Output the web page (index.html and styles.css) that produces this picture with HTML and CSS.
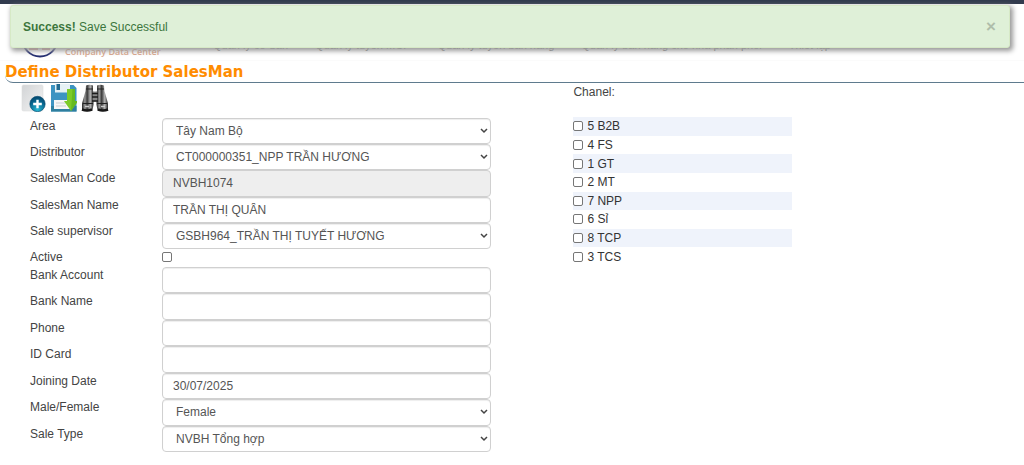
FILE: index.html
```html
<!DOCTYPE html>
<html lang="vi">
<head>
<meta charset="utf-8">
<meta name="viewport" content="width=device-width, initial-scale=1">
<title>Define Distributor SalesMan</title>
<link rel="stylesheet" href="styles.css">
</head>
<body>
<header class="masthead">
  <div class="brand">
    <svg class="brand-mark" width="38" height="38" viewBox="0 0 38 38" aria-hidden="true">
      <circle cx="19" cy="19" r="17.5" fill="#fff" stroke="#252f72" stroke-width="2"/>
      <path d="M8 29h9M21 29h8" stroke="#dc9a91" stroke-width="2"/>
    </svg>
    <span class="brand-name">Company Data Center</span>
  </div>
  <nav class="menu">
    <a href="#">Quản lý cơ bản</a>
    <a href="#">Quản lý tuyến MCP</a>
    <a href="#">Quản lý tuyến bán hàng</a>
    <a href="#">Quản lý bán hàng cho nhà phân phối</a>
    <a href="#">Thiết lập</a>
  </nav>
</header>

<div class="alert" role="alert">
  <span><strong>Success!</strong> Save Successful</span>
  <button class="alert-close" type="button" aria-label="Close">×</button>
</div>

<main>
  <h1 class="title">Define Distributor SalesMan</h1>
  <form class="content">
    <section class="details">
      <div class="toolbar">
        <button class="tool" type="button" aria-label="New">
          <svg width="26" height="28" viewBox="0 0 26 28">
            <defs>
              <linearGradient id="paper" x1="0" y1="0" x2="1" y2="1"><stop offset="0" stop-color="#d2d4d6"/><stop offset="1" stop-color="#f4f4f4"/></linearGradient>
              <radialGradient id="ball" cx=".5" cy=".85" r=".9"><stop offset="0" stop-color="#28b8d4"/><stop offset=".6" stop-color="#08658d"/><stop offset="1" stop-color="#044066"/></radialGradient>
            </defs>
            <rect x="1" y="1" width="21" height="26" rx="1.5" fill="url(#paper)" stroke="#dcdddd" stroke-width=".6"/>
            <circle cx="16.5" cy="20" r="7.7" fill="url(#ball)" stroke="#064b70" stroke-width=".6"/>
            <path d="M16.5 15.7v8.6M12.2 20h8.6" stroke="#fff" stroke-width="2.4"/>
          </svg>
        </button>
        <button class="tool" type="button" aria-label="Save">
          <svg width="26" height="28" viewBox="0 0 26 28">
            <path d="M0 1h22.500L25.500 4v23.500H0z" fill="#3d94c2"/>
            <path d="M0 22h25.500v5.500H0z" fill="#2f7f9f"/>
            <path d="M4 0h15v8.500H4z" fill="#e6f1f5"/>
            <path d="M5.500 0h3.500v6H5.500z" fill="#226b92"/>
            <path d="M3 16h18v9H3z" fill="#f6f6f6"/>
            <path d="M5 19h10M5 22h10" stroke="#c9cfd2"/>
            <path d="M16 5h8v12h3L20 27l-7-10h3z" fill="#7ccb28"/>
            <path d="M21.500 5H24v12h3L20 27z" fill="#66ba20"/>
          </svg>
        </button>
        <button class="tool" type="button" aria-label="Search">
          <svg width="28" height="28" viewBox="0 0 28 28">
            <defs>
              <linearGradient id="tube" x1="0" x2="1"><stop offset="0" stop-color="#222"/><stop offset=".25" stop-color="#999"/><stop offset=".45" stop-color="#3a3a3a"/><stop offset=".72" stop-color="#b5b5b5"/><stop offset="1" stop-color="#222"/></linearGradient>
            </defs>
            <path d="M5 1.500q3.500-1.500 7 0v5l.5 3v11l-1 6q-5 1.500-10.500 0v-7L4.500 7z" fill="url(#tube)"/>
            <path d="M23 1.500q-3.500-1.500-7 0v5l-.5 3v11l1 6q5 1.500 10.500 0v-7L23.500 7z" fill="url(#tube)"/>
            <path d="M12 7.500h4v10h-4z" fill="#888"/>
            <path d="M11 9.500h6M11 13h6M11 17h6" stroke="#1c1c1c" stroke-width="1.500"/>
            <path d="M5 5h7M16 5h7M2 19.500h10M16 19.500h10" stroke="#222" stroke-width="1"/>
            <path d="M1 25.500q5 2 10 0M17 25.500q5 2 10 0" stroke="#181818" stroke-width="2.500" fill="none"/>
            <path d="M4 22.500h4M20 22.500h4" stroke="#ccc" stroke-width="1.500"/>
          </svg>
        </button>
      </div>

      <div class="rows rows-main">
        <div class="row"><label for="area">Area</label><select id="area" class="field"><option>Tây Nam Bộ</option></select></div>
        <div class="row"><label for="distributor">Distributor</label><select id="distributor" class="field"><option>CT000000351_NPP TRẦN HƯƠNG</option></select></div>
        <div class="row"><label for="code">SalesMan Code</label><input id="code" class="field" type="text" value="NVBH1074" readonly></div>
        <div class="row"><label for="name">SalesMan Name</label><input id="name" class="field" type="text" value="TRẦN THỊ QUÂN"></div>
        <div class="row"><label for="supervisor">Sale supervisor</label><select id="supervisor" class="field"><option>GSBH964_TRẦN THỊ TUYẾT HƯƠNG</option></select></div>
      </div>
      <div class="row row-check"><label for="active">Active</label><input id="active" class="tick" type="checkbox"></div>
      <div class="rows rows-extra">
        <div class="row"><label for="account">Bank Account</label><input id="account" class="field" type="text"></div>
        <div class="row"><label for="bank">Bank Name</label><input id="bank" class="field" type="text"></div>
        <div class="row"><label for="phone">Phone</label><input id="phone" class="field" type="text"></div>
        <div class="row"><label for="idcard">ID Card</label><input id="idcard" class="field" type="text"></div>
        <div class="row"><label for="joining">Joining Date</label><input id="joining" class="field" type="text" value="30/07/2025"></div>
        <div class="row"><label for="gender">Male/Female</label><select id="gender" class="field"><option>Female</option></select></div>
        <div class="row"><label for="saletype">Sale Type</label><select id="saletype" class="field"><option>NVBH Tổng hợp</option></select></div>
      </div>
    </section>

    <fieldset class="channels">
      <legend>Chanel:</legend>
      <div class="channel-list">
        <label class="channel"><input class="tick" type="checkbox">5 B2B</label>
        <label class="channel"><input class="tick" type="checkbox">4 FS</label>
        <label class="channel"><input class="tick" type="checkbox">1 GT</label>
        <label class="channel"><input class="tick" type="checkbox">2 MT</label>
        <label class="channel"><input class="tick" type="checkbox">7 NPP</label>
        <label class="channel"><input class="tick" type="checkbox">6 Sỉ</label>
        <label class="channel"><input class="tick" type="checkbox">8 TCP</label>
        <label class="channel"><input class="tick" type="checkbox">3 TCS</label>
      </div>
    </fieldset>
  </form>
</main>
</body>
</html>
```
FILE: styles.css
```css
* {
  box-sizing: border-box;
}

body {
  margin: 0;
  background: #fff;
  color: #444;
  font: 12px/16px "Liberation Sans", Arial, sans-serif;
}

.masthead {
  display: flex;
  align-items: flex-end;
  height: 61px;
  padding: 0 20px 2px 21px;
  border-top: 4px solid #323b4e;
  border-bottom: 1px solid #fbfbfb;
}

.brand {
  display: flex;
  align-items: flex-end;
  gap: 6px;
  width: 192px;
}

.brand-name {
  color: #dba78c;
  font: 600 9px/12px "Open Sans", sans-serif;
  white-space: nowrap;
}

.menu {
  display: flex;
  gap: 27px;
  padding-bottom: 5px;
  white-space: nowrap;
}

.menu a {
  color: #777;
  font-size: 11px;
  text-decoration: none;
}

.alert {
  position: absolute;
  top: 5px;
  left: 10px;
  right: 14px;
  display: flex;
  align-items: center;
  justify-content: space-between;
  height: 43px;
  padding: 0 13px 0 12px;
  border: 1px solid #d6e9c6;
  border-radius: 3px;
  background: #dff0d8;
  box-shadow: 2px 2px 5px 1px #999;
  color: #3c763d;
}

.alert-close {
  padding: 0;
  border: 0;
  background: none;
  color: #afbdaa;
  font: bold 17px/20px "Liberation Sans", Arial, sans-serif;
}

.title {
  margin: 0 0 0 5px;
  height: 22px;
  border-bottom: 1px solid #5f7b8e;
  border-bottom-left-radius: 8px;
  color: #ff8c00;
  font: bold 15px/22px "DejaVu Sans", Verdana, sans-serif;
}

.content {
  display: grid;
  grid-template-columns: 56fr 44fr;
}

.details {
  padding: 1px 82px 0 30px;
}

.toolbar {
  display: flex;
  gap: 4px;
  height: 34px;
  margin-left: -9px;
}

.tool {
  display: flex;
  align-items: flex-start;
  padding: 0;
  border: 0;
  background: none;
}

.rows {
  display: grid;
  grid-auto-rows: 1fr;
}

.rows-main {
  min-height: 131px;
}

.rows-extra {
  min-height: 185px;
}

.row {
  display: grid;
  grid-template-columns: 132px 1fr;
  align-items: start;
}

.row-check {
  height: 18px;
}

.field {
  width: 100%;
  height: 100%;
  min-height: 26px;
  margin: 0;
  padding: 0 10px;
  border: 1px solid #d0d0d0;
  border-radius: 4px;
  background: #fff;
  box-shadow: inset 0 1px 1px #eee;
  color: #555;
  font: inherit;
}

.field[readonly] {
  background: #eee;
}

select.field {
  appearance: none;
  padding: 0 20px 0 13px;
  background: #fff url("data:image/svg+xml,%3Csvg xmlns='http://www.w3.org/2000/svg' width='8' height='6'%3E%3Cpath d='M1 1l3 3 3-3' fill='none' stroke='%23444' stroke-width='1.5'/%3E%3C/svg%3E") no-repeat right 2px center;
}

.tick {
  appearance: none;
  width: 10px;
  height: 10px;
  margin: 0;
  border: 1px solid #767676;
  border-radius: 2px;
  background: #fff;
}

.tick:checked {
  background: #0075ff;
}

.row-check .tick {
  margin-top: 3px;
}

.channels {
  margin: 0;
  padding: 0;
  border: 0;
}

.channels legend {
  padding: 1px 0 0;
}

.channel-list {
  display: grid;
  grid-auto-rows: 1fr;
  width: 219px;
  min-height: 149px;
  margin-top: 17px;
  color: #333;
}

.channel {
  display: flex;
  align-items: center;
  gap: 4px;
}

.channel:nth-child(odd) {
  background: #eff3fb;
}
```
